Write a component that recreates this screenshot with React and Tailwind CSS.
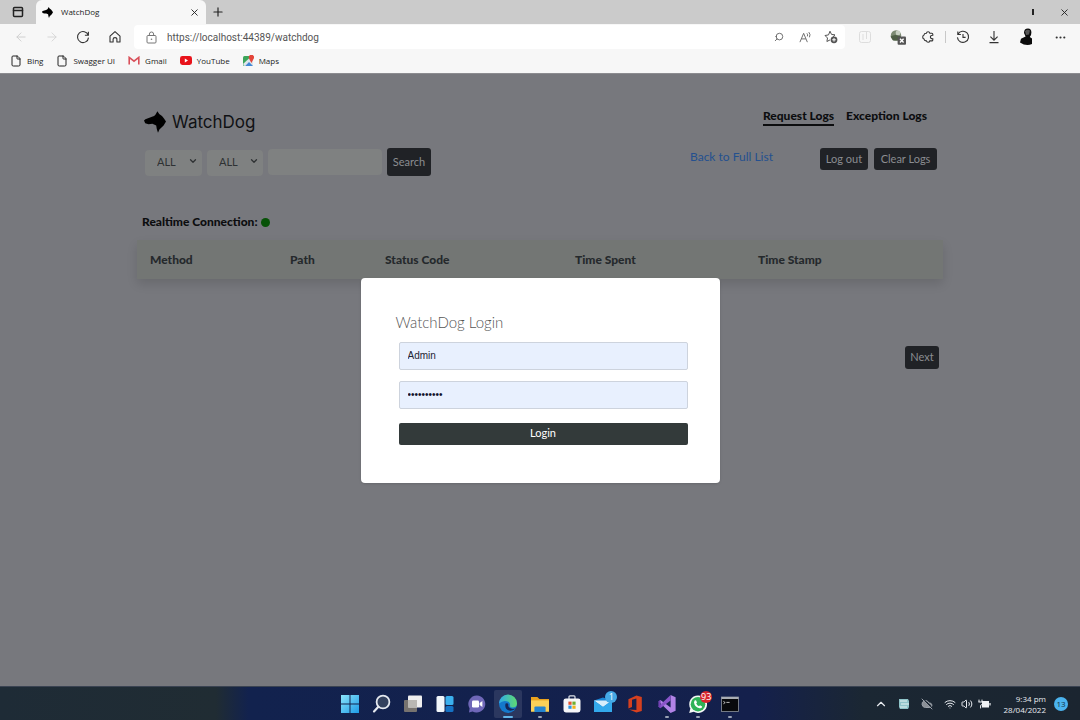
import React from "react";
import { useState } from "react";
import {
    ArrowLeft,
    ArrowRight,
    ChevronDown,
    ChevronUp,
    CloudOff,
    Ellipsis,
    File,
    PanelTop,
    Plus,
    Search,
    Volume2,
    Wifi,
    X,
} from "lucide-react";

const DogLogo = ({ className }) => (
    <svg viewBox="0 0 22 22" className={className} fill="currentColor" aria-hidden="true">
        <path d="M0 9.4 L1.4 8.2 L8 5.8 Q10.4 5 11.6 3.4 L13.4 0.2 L15.2 3 Q18.4 4.6 20 7.4 L22 10.4 L19.6 14.6 L15.4 18.4 L14 21.8 Q12.6 18.4 12.2 14.4 L8.4 12.8 L4.6 13.2 L1.2 12.2 Z" />
    </svg>
);

const IconButton = ({ label, className = "", children }) => (
    <button type="button" aria-label={label} className={"flex items-center justify-center " + className}>
        {children}
    </button>
);

const TabStrip = () => (
    <div className="flex h-6 shrink-0 items-center bg-[#cbcbcb] text-[#222222]">
        <IconButton label="Tab actions" className="w-9">
            <PanelTop size={12} strokeWidth={3} />
        </IconButton>
        <div className="flex h-full w-[170px] items-center rounded-t-md bg-[#f7f7f7] pl-[6px] pr-1">
            <DogLogo className="h-[11px] w-[11px] text-black" />
            <span className="ml-2 flex-1 text-[8px]">WatchDog</span>
            <IconButton label="Close tab" className="h-4 w-4">
                <X size={11} strokeWidth={2} />
            </IconButton>
        </div>
        <IconButton label="New tab" className="h-5 w-6">
            <Plus size={14} strokeWidth={2} />
        </IconButton>
        <div className="ml-auto flex items-center">
            <span className="h-[6px] w-[2px] bg-[#222222]" />
            <IconButton label="Close window" className="ml-5 mr-[6px] h-5 w-5">
                <X size={11} strokeWidth={2} />
            </IconButton>
        </div>
    </div>
);

const Toolbar = () => (
    <div className="flex h-[26px] shrink-0 items-center bg-[#f7f7f7] pr-[13px] text-[#333333]">
        <IconButton label="Back" className="ml-[14px] w-[14px] text-[#cccccc]">
            <ArrowLeft size={14} strokeWidth={1.5} />
        </IconButton>
        <IconButton label="Forward" className="ml-[17px] w-[14px] text-[#d4d4d4]">
            <ArrowRight size={14} strokeWidth={1.5} />
        </IconButton>
        <IconButton label="Refresh" className="ml-[17px] w-[14px]">
            <svg viewBox="0 0 14 14" width="14" height="14" fill="none" stroke="currentColor" strokeWidth="1.1">
                <path d="M12.2 5.2 A5.5 5.5 0 1 0 12.5 7.6 M12.4 1.8 V5.3 H8.9" />
            </svg>
        </IconButton>
        <IconButton label="Home" className="ml-[18px] w-[14px]">
            <svg viewBox="0 0 14 14" width="14" height="14" fill="none" stroke="currentColor" strokeWidth="1.1" strokeLinejoin="round">
                <path d="M2 6.2 L7 1.6 L12 6.2 V12 H8.9 V9.2 Q8.9 7.6 7 7.6 Q5.1 7.6 5.1 9.2 V12 H2 Z" />
            </svg>
        </IconButton>
        <div className="ml-3 flex h-6 flex-1 items-center rounded-sm bg-white pl-3 pr-[6px]">
            <svg viewBox="0 0 11 13" width="11" height="13" fill="none" stroke="#777777">
                <rect x="1" y="4.5" width="9" height="7.5" rx="1" />
                <path d="M3.4 4.5 V3 Q3.4 1 5.5 1 Q7.6 1 7.6 3 V4.5" />
                <circle cx="5.5" cy="8.2" r="0.8" fill="#777777" stroke="none" />
            </svg>
            <input
                type="text"
                aria-label="Address"
                defaultValue="https://localhost:44389/watchdog"
                className="ml-[10px] min-w-0 flex-1 bg-white font-[Roboto,sans-serif] text-[10px] text-[#555555] outline-none"
            />
            <IconButton label="Zoom" className="w-4">
                <Search size={10} strokeWidth={2} className="-scale-x-100 text-[#555555]" />
            </IconButton>
            <IconButton label="Read aloud" className="ml-[10px] w-4">
                <svg viewBox="0 0 14 14" width="13" height="13" fill="none" stroke="#666666" strokeWidth="1">
                    <path d="M1 12 L5 2.5 L9 12 M2.6 8.5 H7.4 M8.5 2.5 Q9.8 4 9 5.8 M10.6 1.2 Q12.8 3.8 11.2 6.8" />
                </svg>
            </IconButton>
            <IconButton label="Add to favorites" className="ml-[10px] w-4">
                <svg viewBox="0 0 14 14" width="14" height="14" fill="none" stroke="#555555" strokeWidth="1">
                    <path d="M6 1.2 L7.5 4.4 L11 4.9 L8.5 7.3 M6 9.9 L2.9 11.5 L3.5 8 L1 5.5 L4.5 4.9 L6 1.2" />
                    <circle cx="10" cy="9.8" r="3.4" fill="#555555" stroke="none" />
                    <path d="M10 8 V11.6 M8.2 9.8 H11.8" stroke="#ffffff" />
                </svg>
            </IconButton>
        </div>
        <IconButton label="Collections" className="ml-[14px] w-3">
            <svg viewBox="0 0 12 12" width="12" height="12" fill="none" stroke="#dddddd">
                <rect x="0.5" y="0.5" width="11" height="11" rx="2" />
                <path d="M4 3 V9 M7.5 1 V8" />
            </svg>
        </IconButton>
        <IconButton label="Extension" className="ml-[18px] w-[18px]">
            <svg viewBox="0 0 18 18" width="18" height="18">
                <circle cx="7" cy="7.5" r="5.2" fill="#7d8b73" />
                <circle cx="9" cy="5" r="2.4" fill="#c7cfc2" />
                <path d="M1.5 8.5 Q6 5.5 12 8.5 L10 12.6 H4 Z" fill="#4f5f46" />
                <rect x="8.6" y="8.4" width="8.4" height="8.4" rx="1" fill="#555555" />
                <path d="M11 10.8 L14.6 14.4 M14.6 10.8 L11 14.4" stroke="#ffffff" strokeWidth="1.4" />
            </svg>
        </IconButton>
        <IconButton label="Extensions" className="ml-[15px] w-3">
            <svg viewBox="0 0 12 12" width="12" height="12" fill="none" stroke="currentColor" strokeWidth="1.1">
                <path d="M10.8 4.3 V3.3 Q10.8 2.3 9.8 2.3 H7.8 Q7.6 0.8 6.1 0.8 Q4.6 0.8 4.4 2.3 Q2.2 2.2 2 4 Q0.7 4.6 0.7 6 Q0.7 7.6 2 8 Q2.2 10 4.4 9.9 Q4.8 11.3 6.1 11.3 Q7.5 11.3 7.8 9.9 H9.8 Q10.8 9.9 10.8 8.9 V7.8 Q8.4 7.8 8.4 6 Q8.4 4.3 10.8 4.3 Z" />
            </svg>
        </IconButton>
        <span className="ml-[11px] h-3 w-px bg-[#c8c8c8]" />
        <IconButton label="History" className="ml-[10px] w-[14px]">
            <svg viewBox="0 0 14 14" width="14" height="14" fill="none" stroke="currentColor" strokeWidth="1.1">
                <path d="M2 4.2 A5.6 5.6 0 1 1 1.4 7.4 M1.8 1.4 V4.5 H4.9 M7 4 V7.4 H9.6" />
            </svg>
        </IconButton>
        <IconButton label="Downloads" className="ml-[18px] w-3">
            <svg viewBox="0 0 12 14" width="12" height="14" fill="none" stroke="currentColor" strokeWidth="1.1">
                <path d="M6 1 V10 M2.4 6.6 L6 10.2 L9.6 6.6 M1.5 12.6 H10.5" />
            </svg>
        </IconButton>
        <IconButton label="Profile" className="ml-[18px] w-4">
            <svg viewBox="0 0 16 18" width="16" height="18">
                <path d="M6 5 Q6 0.6 10 0.6 Q13.4 0.6 13.4 4.6 Q13.4 7.6 11.8 9 L14 10.6 V16 Q8 18.4 2 14.4 L3 10.8 L7.6 8.6 Z" fill="#0b0b0b" />
                <path d="M7 3.2 Q9 1 12 2.4 L11 6.4 L8 7 Z" fill="#555555" />
            </svg>
        </IconButton>
        <IconButton label="Settings and more" className="ml-[19px] w-[14px]">
            <Ellipsis size={13} strokeWidth={2} />
        </IconButton>
    </div>
);

const GmailIcon = () => (
    <svg viewBox="0 0 12 9" width="12" height="9">
        <path d="M1.2 8.4 V1.4 L6 5.2 L10.8 1.4 V8.4" fill="none" stroke="#d9505a" strokeWidth="1.6" />
    </svg>
);

const YouTubeIcon = () => (
    <svg viewBox="0 0 12 9" width="12" height="9">
        <rect width="12" height="9" rx="2.4" fill="#e8131b" />
        <path d="M4.8 2.6 L8 4.5 L4.8 6.4 Z" fill="#ffffff" />
    </svg>
);

const MapsIcon = () => (
    <svg viewBox="0 0 11 11" width="11" height="11">
        <rect y="1" width="10" height="10" rx="1.5" fill="#3ba55a" />
        <path d="M0 9 L7.5 2 L10 4.5 V11 H1.5 Z" fill="#dfe6ea" />
        <path d="M2.2 11 L6 7 L10 11 Z" fill="#4287d6" />
        <path d="M8.4 8 L6 3.6 A2.7 2.7 0 1 1 10.8 3.6 Z" fill="#e3453a" />
    </svg>
);

const bookmarks = [
    { title: "Bing", href: "#bing", icon: <File size={12} strokeWidth={2} /> },
    { title: "Swagger UI", href: "#swagger", icon: <File size={12} strokeWidth={2} /> },
    { title: "Gmail", href: "#gmail", icon: <GmailIcon /> },
    { title: "YouTube", href: "#youtube", icon: <YouTubeIcon /> },
    { title: "Maps", href: "#maps", icon: <MapsIcon /> },
];

const BookmarksBar = () => (
    <nav aria-label="Bookmarks" className="flex h-6 shrink-0 items-center gap-[13px] border-b border-[#8c8c90] bg-[#f7f7f7] px-[10px] pb-[2px] text-[8px] text-[#222222]">
        {bookmarks.map((b) => (
            <a key={b.title} href={b.href} className="flex items-center gap-[5px]">
                {b.icon}
                {b.title}
            </a>
        ))}
    </nav>
);

const FilterSelect = ({ label, className }) => (
    <div className={"relative " + className}>
        <select aria-label={label} className="h-[26px] w-full appearance-none rounded-sm bg-[#7f8181] pl-3 text-[11px] text-[#2e3133]">
            <option>ALL</option>
        </select>
        <ChevronDown size={10} strokeWidth={3} className="pointer-events-none absolute right-1 top-2 text-[#2e3133]" />
    </div>
);

const DarkButton = ({ className = "", children }) => (
    <button type="button" className={"rounded-[3px] bg-[#202226] text-[11px] text-[#8b8d91] " + className}>
        {children}
    </button>
);

const LogsPage = () => (
    <div className="mx-auto w-full max-w-[806px] pt-[34px]">
        <header className="flex items-start justify-between pl-[7px] pr-4">
            <a href="#home" className="flex items-center gap-[6px] pt-[2px] text-black">
                <DogLogo className="h-[22px] w-[22px]" />
                <span className="font-[Inter,sans-serif] text-[17px] leading-6 text-[#101114]">WatchDog</span>
            </a>
            <nav className="flex gap-3 text-[12px] font-black leading-4 text-[#0c0d0f]">
                <a href="#requests" className="border-b-2 border-[#0c0d0f]">Request Logs</a>
                <a href="#exceptions">Exception Logs</a>
            </nav>
        </header>

        <div className="mt-[14px] flex items-start justify-between pl-2 pr-[6px]">
            <form className="flex items-center gap-[5px]" onSubmit={(e) => e.preventDefault()}>
                <FilterSelect label="Method" className="w-[57px]" />
                <FilterSelect label="Status" className="w-[56px]" />
                <input type="text" aria-label="Search logs" className="h-[26px] w-[114px] rounded-sm bg-[#7f8181] px-2 text-[11px]" />
                <DarkButton className="h-7 w-[44px]">Search</DarkButton>
            </form>
            <div className="flex items-start">
                <a href="#all" className="mr-[47px] pt-px text-[12px] leading-4 text-[#24508f]">Back to Full List</a>
                <DarkButton className="mr-[6px] h-[22px] w-12">Log out</DarkButton>
                <DarkButton className="h-[22px] w-[63px]">Clear Logs</DarkButton>
            </div>
        </div>

        <p className="mt-9 flex items-center gap-[3px] pl-[5px] text-[12px] font-black leading-5 text-[#0c0d0f]">
            Realtime Connection:
            <span className="h-[9px] w-[9px] rounded-full bg-[#075207]" />
        </p>

        <table className="mt-2 w-full table-fixed bg-[#737674] text-left text-[12px] text-[#25292c] shadow-[0_5px_10px_rgba(0,0,0,0.12)]">
            <thead>
                <tr className="h-[39px] font-black">
                    <th className="w-[140px] pl-[13px] font-black">Method</th>
                    <th className="w-[95px] pl-[13px] font-black">Path</th>
                    <th className="w-[190px] pl-[13px] font-black">Status Code</th>
                    <th className="w-[183px] pl-[13px] font-black">Time Spent</th>
                    <th className="pl-[13px] font-black">Time Stamp</th>
                </tr>
            </thead>
        </table>

        <div className="mt-[67px] flex justify-end pr-1">
            <DarkButton className="h-[23px] w-[34px]">Next</DarkButton>
        </div>
    </div>
);

const LoginDialog = () => {

    const [username, setUsername] = useState("Admin");
    const [password, setPassword] = useState("watchdog22");

    return (
        <div className="absolute inset-0 flex items-center justify-center">
            <form
                role="dialog"
                aria-labelledby="login-title"
                onSubmit={(e) => e.preventDefault()}
                className="w-[359px] rounded bg-white px-8 pb-[38px] pt-8 shadow-sm"
            >
                <h1 id="login-title" className="pl-[3px] text-[15px] font-light leading-6 text-[#555555]">WatchDog Login</h1>
                <div className="mt-2 flex flex-col pl-[6px]">
                    <input
                        type="text"
                        aria-label="Username"
                        value={username}
                        onChange={(e) => setUsername(e.target.value)}
                        className="h-7 rounded-xs border border-[#cdd3dd] bg-[#e8f0fe] px-2 font-['Liberation_Sans',sans-serif] text-[10px] text-[#1f2433]"
                    />
                    <input
                        type="password"
                        aria-label="Password"
                        value={password}
                        onChange={(e) => setPassword(e.target.value)}
                        className="mt-[11px] h-7 rounded-xs border border-[#cdd3dd] bg-[#e8f0fe] px-2 font-['Liberation_Sans',sans-serif] text-[10px] text-[#10142a]"
                    />
                    <button type="submit" className="mt-[14px] h-[22px] rounded-xs bg-[#333a3a] text-[11px] text-white">
                        Login
                    </button>
                </div>
            </form>
        </div>
    );
};

const apps = [
    {
        name: "Start",
        icon: (
            <>
                <defs>
                    <linearGradient id="start" x1="0" y1="0" x2="1" y2="1">
                        <stop stopColor="#8be4fb" />
                        <stop offset="1" stopColor="#1d9be6" />
                    </linearGradient>
                </defs>
                <path d="M1 1 H9.5 V9.5 H1 Z M10.5 1 H19 V9.5 H10.5 Z M1 10.5 H9.5 V19 H1 Z M10.5 10.5 H19 V19 H10.5 Z" fill="url(#start)" />
            </>
        ),
    },
    {
        name: "Search",
        icon: (
            <>
                <circle cx="11" cy="8" r="6.4" fill="#33415e" stroke="#e4e8ef" strokeWidth="1.8" />
                <path d="M6.4 12.8 L2 17.4" stroke="#e4e8ef" strokeWidth="2.2" strokeLinecap="round" />
            </>
        ),
    },
    {
        name: "Task view",
        icon: (
            <>
                <rect x="1" y="6" width="13" height="12" rx="1" fill="#77736f" />
                <rect x="5" y="1.5" width="14" height="12" rx="1" fill="#efefef" />
                <rect x="5" y="6" width="9" height="7.5" fill="#b9b7b3" />
            </>
        ),
    },
    {
        name: "Widgets",
        icon: (
            <>
                <rect x="1.5" y="2" width="8" height="16" rx="1.5" fill="#f2f7fb" />
                <rect x="10.5" y="2" width="8" height="9" rx="1.5" fill="#3bb0ee" />
                <rect x="10.5" y="12" width="8" height="6" rx="1.5" fill="#1672c4" />
            </>
        ),
    },
    {
        name: "Chat",
        icon: (
            <>
                <path d="M10 1.5 A8.5 8.5 0 1 1 5.6 17.4 L2 18.4 L2.6 14.4 A8.5 8.5 0 0 1 10 1.5 Z" fill="#6f67b8" />
                <rect x="5" y="6.5" width="7" height="7" rx="1.2" fill="#ffffff" />
                <path d="M12.6 9 L15.4 7 V13 L12.6 11 Z" fill="#ffffff" />
            </>
        ),
    },
    {
        name: "Microsoft Edge",
        active: true,
        icon: (
            <>
                <defs>
                    <linearGradient id="edge" x1="0" y1="0" x2="1" y2="0">
                        <stop stopColor="#2fa8e8" />
                        <stop offset="1" stopColor="#5fdc70" />
                    </linearGradient>
                </defs>
                <circle cx="10" cy="10" r="9" fill="#1478cc" />
                <path d="M1 9.6 A9 9 0 0 1 19 9.4 Q19 13.4 14.6 13.6 Q11.6 13.6 12 11.6 Q12.6 9.4 10.4 7.8 Q5.4 5.4 1 9.6 Z" fill="url(#edge)" />
                <path d="M7.6 9.6 Q6.2 14.6 11 16.6 Q15 17.4 18 14 Q15.6 15.4 13 14.6 Q9.6 13.4 10.4 10.4 Q9.6 8.4 7.6 9.6 Z" fill="#14265a" />
            </>
        ),
    },
    {
        name: "File Explorer",
        open: true,
        icon: (
            <>
                <path d="M1 3 H7.4 L9.4 5 H19 V17.6 H1 Z" fill="#e9a21e" />
                <path d="M1 6.4 H19 V17.6 H1 Z" fill="#fbd258" />
                <path d="M4.4 18 V13.6 Q4.4 12.4 5.6 12.4 H14.4 Q15.6 12.4 15.6 13.6 V18 Z" fill="#2484d0" />
            </>
        ),
    },
    {
        name: "Microsoft Store",
        icon: (
            <>
                <path d="M7 5 V2.8 Q7 1.8 8 1.8 H12 Q13 1.8 13 2.8 V5" fill="none" stroke="#dfe3ea" strokeWidth="1.2" />
                <rect x="1.5" y="4.4" width="17" height="14" rx="2.4" fill="#f5f6f8" />
                <path d="M6.4 7.6 H9.6 V10.8 H6.4 Z" fill="#e6532f" />
                <path d="M10.4 7.6 H13.6 V10.8 H10.4 Z" fill="#6fae2e" />
                <path d="M6.4 11.6 H9.6 V14.8 H6.4 Z" fill="#2a94dd" />
                <path d="M10.4 11.6 H13.6 V14.8 H10.4 Z" fill="#f2b21c" />
            </>
        ),
    },
    {
        name: "Mail",
        badge: "1",
        badgeClass: "bg-[#45a9e6]",
        icon: (
            <>
                <path d="M1 6.4 L10 3.4 L19 6.4 V18 H1 Z" fill="#1b86d6" />
                <path d="M1 6.4 H19 L10 13 Z" fill="#d8eefb" />
                <path d="M1 6.4 L10 13 L19 6.4 V18 H1 Z" fill="#33a9ec" />
            </>
        ),
    },
    {
        name: "Office",
        icon: (
            <path
                d="M3.4 5.2 L11.4 1.4 L16.8 3 V17 L11.4 18.6 L4 15.6 L11.4 16 V4.6 L7 5.8 V13 L3.4 14.6 Z"
                fill="#d5401f"
            />
        ),
    },
    {
        name: "Visual Studio",
        open: true,
        icon: (
            <>
                <path d="M13.6 1 L18.6 3.2 V16.8 L13.6 19 L1.6 7.4 L3.4 6 L13.6 13.6 Z" fill="#b183e6" />
                <path d="M13.6 1 L1.4 12.6 L3.4 14.2 L13.6 6.4 Z" fill="#8a55c9" />
                <path d="M1.4 7.2 L3.6 6 V14.2 L1.4 12.8 Z" fill="#7442b4" />
            </>
        ),
    },
    {
        name: "WhatsApp",
        open: true,
        badge: "93",
        badgeClass: "bg-[#d9252c]",
        icon: (
            <>
                <path d="M10 1.4 A8.8 8.8 0 1 1 5.8 17.8 L1.2 19 L2.4 14.6 A8.8 8.8 0 0 1 10 1.4 Z" fill="#f4f8f5" />
                <circle cx="10" cy="10.2" r="7.3" fill="#2fb257" />
                <path d="M6.6 6.6 L8 6.2 L9 8.4 L8.2 9.4 Q9.2 11.4 11 12.2 L12 11.2 L14.2 12.4 Q13.8 14.6 11.6 14.2 Q6.6 12.8 6 8.4 Z" fill="#ffffff" />
            </>
        ),
    },
    {
        name: "Terminal",
        open: true,
        icon: (
            <>
                <rect x="1.5" y="3" width="17" height="14.5" fill="#08090c" stroke="#8d939c" strokeWidth="0.8" />
                <path d="M1.5 3 H18.5 V5 H1.5 Z" fill="#a9adb4" />
                <path d="M3.4 7.4 L5.2 8.6 L3.4 9.8 M6.4 8.4 H9.6" stroke="#e8e8e8" strokeWidth="0.8" fill="none" />
            </>
        ),
    },
];

const TaskbarApp = ({ app }) => (
    <button
        type="button"
        aria-label={app.name}
        className={"relative flex h-7 w-7 items-center justify-center rounded-xs" + (app.active ? " bg-white/10" : "")}
    >
        <svg viewBox="0 0 20 20" className="h-5 w-5">{app.icon}</svg>
        {app.badge && (
            <span className={"absolute right-0 top-px flex h-3 min-w-3 items-center justify-center rounded-full text-[9px] text-white " + app.badgeClass}>
                {app.badge}
            </span>
        )}
        {app.active && <span className="absolute bottom-0 h-[2px] w-[10px] rounded-full bg-[#62b5ea]" />}
        {app.open && <span className="absolute bottom-0 h-[2px] w-1 rounded-full bg-[#9aa3b5]" />}
    </button>
);

const Taskbar = () => (
    <footer className="grid h-[34px] shrink-0 grid-cols-[1fr_auto_1fr] items-center border-t border-[#3a4352] bg-[linear-gradient(90deg,#1e2b36_0%,#202c33_20%,#12224e_23%,#14204c_70%,#1b2733_80%,#1b2530_100%)] text-[#e8ebf0]">
        <div />
        <div className="flex w-[408px] justify-between">
            {apps.map((app) => (
                <TaskbarApp key={app.name} app={app} />
            ))}
        </div>
        <div className="flex items-center justify-end pr-3">
            <ChevronUp size={14} strokeWidth={2} />
            <svg viewBox="0 0 12 12" width="12" height="12" className="ml-[10px]">
                <path d="M1 1 H10 L11 3 V9 L10 11 H2 L1 9 Z" fill="#8fc4c9" />
                <path d="M2 3 H9 M3 6 H11 M2 9 H9" stroke="#e8f4f4" strokeWidth="1.2" />
            </svg>
            <CloudOff size={12} className="ml-[11px] fill-[#8b9097] text-[#9aa0a8]" />
            <Wifi size={12} strokeWidth={2} className="ml-[11px]" />
            <Volume2 size={12} strokeWidth={2} className="ml-[5px]" />
            <svg viewBox="0 0 13 10" width="13" height="10" className="ml-[5px]">
                <path d="M4 2 H11 V8.4 H4 Z M11.4 4 H12.6 V6.4 H11.4 Z" fill="#f0f2f5" />
                <path d="M1 0.6 V3 M4 0.6 V3 M0.4 3 H4.8 V5 L2.6 6.4 V9.4" stroke="#f0f2f5" fill="none" />
            </svg>
            <div className="ml-[13px] text-right text-[8px] leading-[11px]">
                <div>9:34 pm</div>
                <div>28/04/2022</div>
            </div>
            <span className="ml-2 flex h-[14px] w-[14px] items-center justify-center rounded-full bg-[#4bb3ee] text-[8px] text-[#12303f]">13</span>
        </div>
    </footer>
);

const App = () => (
    <div className="flex h-screen flex-col overflow-hidden font-['Open_Sans',sans-serif]">
        <TabStrip />
        <Toolbar />
        <BookmarksBar />
        <main className="relative flex-1 bg-[#77787d] font-[Lato,sans-serif]">
            <LogsPage />
            <LoginDialog />
        </main>
        <Taskbar />
    </div>
);

export default App;
